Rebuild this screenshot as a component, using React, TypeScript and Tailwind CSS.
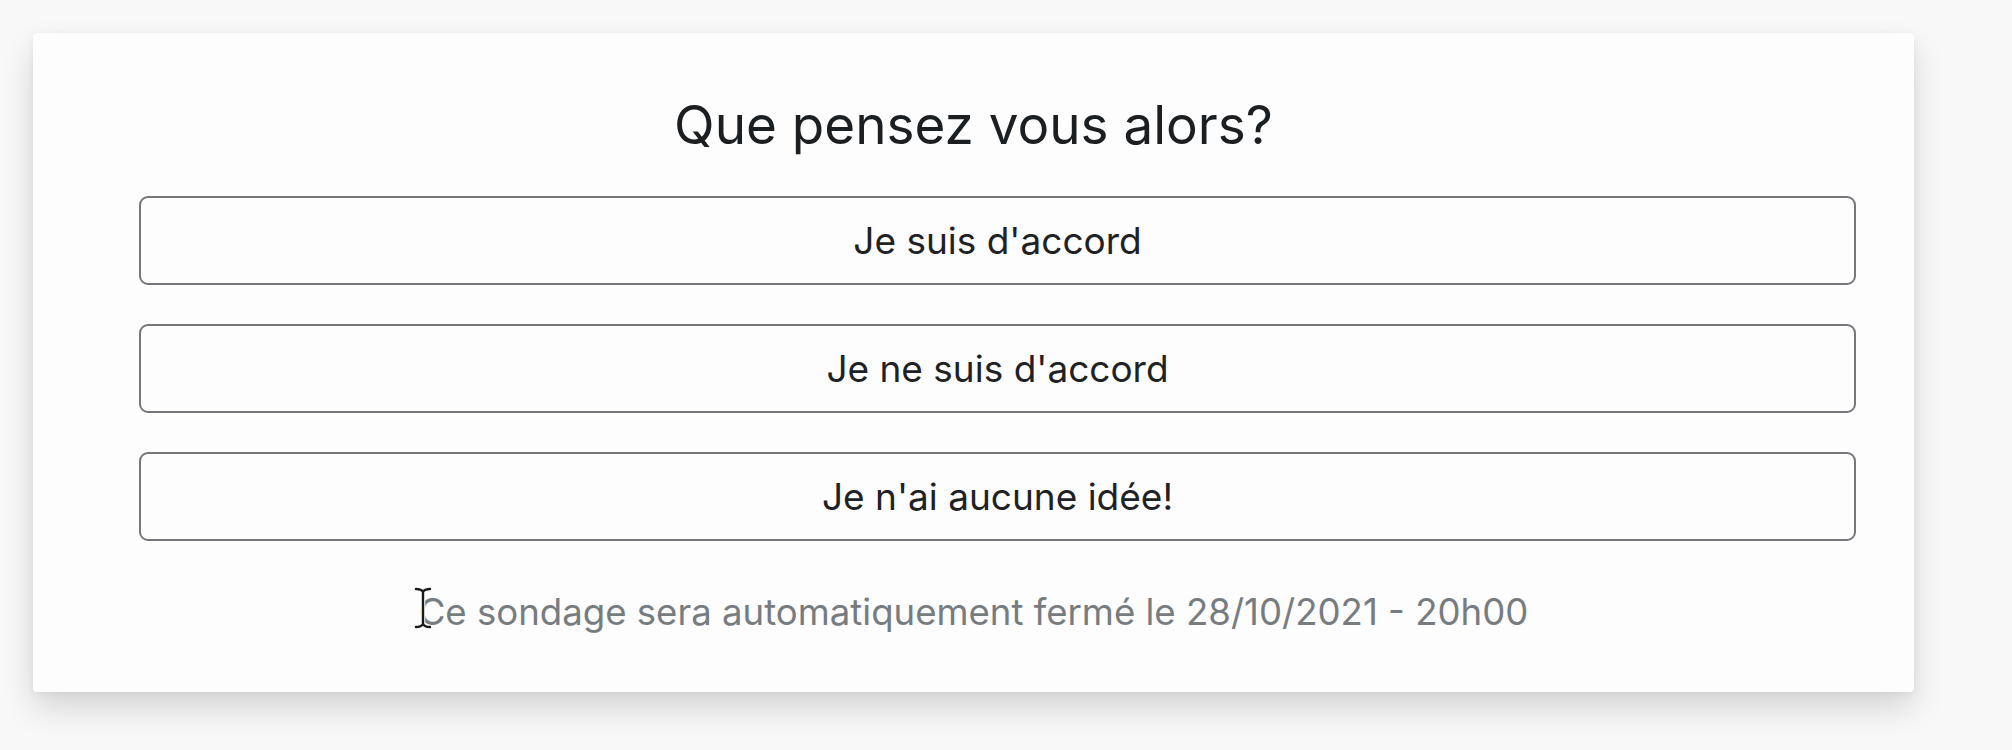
import React from "react";

const options = ["Je suis d'accord", "Je ne suis d'accord", "Je n'ai aucune idée!"];

function TextCursor() {
    return (
        <svg
            className="absolute left-[-6px] top-[-4px]"
            width="20"
            height="44"
            viewBox="0 0 20 44"
            fill="none"
        >
            <path
                d="M3 3 C7 3 9 4 10 6 C11 4 13 3 17 3 M10 6 V38 M3 41 C7 41 9 40 10 38 C11 40 13 41 17 41"
                stroke="#ffffff"
                strokeWidth="4.5"
                strokeLinecap="round"
            />
            <path
                d="M3 3 C7 3 9 4 10 6 C11 4 13 3 17 3 M10 6 V38 M3 41 C7 41 9 40 10 38 C11 40 13 41 17 41"
                stroke="#1a1a1a"
                strokeWidth="2.4"
                strokeLinecap="round"
            />
        </svg>
    );
}

export default function App() {
    return (
        <div
            className="min-h-[750px] w-full bg-[#f8f8f8] pt-[33px] pl-[33px] pr-[98px]"
            style={{ fontFamily: "Inter, 'Liberation Sans', sans-serif" }}
        >
            <div className="w-[1881px] rounded-[4px] bg-[#fdfdfd] pt-[61px] pb-[58px] px-[58px] shadow-[0_16px_32px_rgba(0,0,0,0.14),0_2px_8px_rgba(0,0,0,0.05)]">
                {/* Question */}
                <h1 className="text-center text-[53px] leading-[62px] text-[#1c1f22] font-normal">
                    Que pensez vous alors?
                </h1>

                {/* Options */}
                <div className="mt-[40px] pl-[48px] flex flex-col gap-[39px]">
                    {options.map((label) => (
                        <button
                            key={label}
                            className="h-[89px] w-full flex items-center justify-center rounded-[9px] border-2 border-[#74787c] bg-[#fdfdfd] text-[37px] leading-[44px] text-[#1f2225]"
                        >
                            {label}
                        </button>
                    ))}
                </div>

                {/* Footer */}
                <p className="mt-[49px] text-center text-[36.6px] leading-[44px] text-[#777c81]">
                    <span className="relative">
                        <TextCursor />
                        Ce sondage sera automatiquement fermé le 28/10/2021 - 20h00
                    </span>
                </p>
            </div>
        </div>
    );
}
